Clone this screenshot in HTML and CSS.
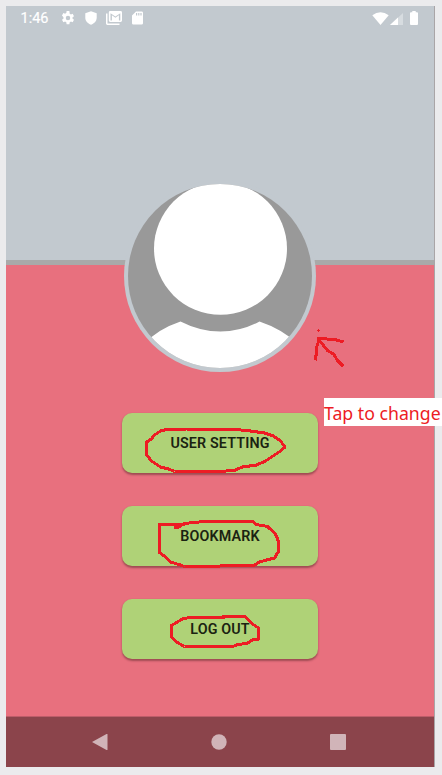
FILE: index.html
```html
<!DOCTYPE html>
<html lang="en">
<head>
<meta charset="utf-8">
<title>Profile</title>
<link rel="stylesheet" href="styles.css">
</head>
<body>
<main class="phone">
  <header class="cover">
    <div class="status">
      <span class="time">1:46</span>
      <svg class="icon gear" viewBox="2.900 2 20 20"><path d="M19.400 13a7.500 7.500 0 0 0 0-2l2.100-1.600-2-3.500-2.500 1a7.600 7.600 0 0 0-1.700-1L14.900 2h-4l-.4 2.900a7.600 7.600 0 0 0-1.700 1l-2.500-1-2 3.500L6.400 11a7.500 7.500 0 0 0 0 2l-2.100 1.600 2 3.500 2.500-1a7.600 7.600 0 0 0 1.700 1l.4 2.900h4l.4-2.900a7.600 7.600 0 0 0 1.700-1l2.500 1 2-3.500zM12.900 15.200a3.200 3.200 0 1 1 0-6.400 3.200 3.200 0 0 1 0 6.400z"/></svg>
      <svg class="icon shield" viewBox="0 0 12 14"><path d="M6 .2 11.700 2.300v4.400c0 3-2.300 5.900-5.700 7C2.600 12.600.3 9.700.3 6.700V2.300z"/></svg>
      <svg class="icon mail" viewBox="0 0 16 14"><path fill-rule="evenodd" d="M4.200 0h10.300Q16 0 16 1.400v8.200Q16 11 14.500 11H4.200Q2.800 11 2.800 9.600V1.400Q2.800 0 4.200 0zM4.500 2.200v7.300h1.400V4.300l3.500 2.500 3.500-2.500v5.200h1.400V2.200L9.400 5.400z"/><path d="M0 2.500h1.500v10h12V14H1.400Q0 14 0 12.600z"/></svg>
      <svg class="icon card" viewBox="0 0 11 14"><path fill-rule="evenodd" d="M4 .5h5.600Q11 .5 11 1.800v10.400q0 1.300-1.400 1.300H1.400Q0 13.500 0 12.200V4.500zM4 2v2.500h1.200V2zm2.200 0v2.500h1.200V2zm2.200 0v2.500h1.200V2z"/></svg>
      <span class="spacer"></span>
      <svg class="icon wifi" viewBox="0 0 17 13"><path d="M.3 3.200Q8.500-2.800 16.700 3.200L8.500 13z"/></svg>
      <svg class="icon signal" viewBox="0 0 13 12"><path opacity=".35" d="M13 0v12H0z"/><path d="M8 4.600V12H0z"/></svg>
      <svg class="icon battery" viewBox="0 0 8 14"><path d="M2.300 0h3.400v1.300H7q1 0 1 1V13q0 1-1 1H1q-1 0-1-1V2.300q0-1 1-1h1.300z"/></svg>
    </div>
  </header>
  <section class="profile">
    <svg class="avatar" viewBox="0 0 192 192">
      <defs><clipPath id="face"><circle cx="96" cy="96" r="92"/></clipPath></defs>
      <circle cx="96" cy="96" r="96" fill="#c2c9cf"/>
      <g clip-path="url(#face)">
        <rect width="192" height="192" fill="#999"/>
        <ellipse cx="96.500" cy="68.500" rx="66.500" ry="66.300" fill="#fff"/>
        <path d="M20 164Q34 149 56.500 141.500 76 151.500 96.500 151.500T135.500 141.500Q158 149 174 164V192H20z" fill="#fff"/>
      </g>
    </svg>
    <nav class="actions">
      <button class="action">USER SETTING</button>
      <button class="action">BOOKMARK</button>
      <button class="action">LOG OUT</button>
    </nav>
  </section>
  <footer class="navbar">
    <svg class="navicon" viewBox="0 0 18 18"><path d="M1 9 15.500 1Q16.500.6 16.500 1.600v14.800q0 1-1 .6z"/></svg>
    <svg class="navicon" viewBox="0 0 18 18"><circle cx="9" cy="9" r="7.700"/></svg>
    <svg class="navicon" viewBox="0 0 18 18"><rect x="1" y="1" width="16" height="16" rx="1"/></svg>
  </footer>
</main>
<svg class="marks" viewBox="-.5 -.5 442 775">
  <path d="M319 338 334 339 343 341.500M318 336V341L316.500 345.500 315 360M319 340 327 350 333 353.500 337 360 343 366"/>
  <path stroke-width="1" d="M316.500 330h3M318 328.500v3"/>
  <path d="M185 428.500 168 428.500 160 430.500 154 434.500 151 438.500 146 441.500V454L151 460.500 160 466.500 168 468.500 174 471H221L235 469.500 242 466.500 256 464.500 265 460.500 274 454.500 280 450.500 284.500 446.500 280 440.500 273 435.500 264 432.500 250 430.500 235 429Z"/>
  <path d="M173 527H177L184 523 203 521H252L256 524 267 526 275 533.500 278 541V551L274 557.500 266 559.500 259 561.500 254 564.500H224L217 566H184L180 564.500 170 561.500 165 556.500 158.500 551.500V523.500H184"/>
  <path d="M223 617H189L182 618.500 171 625V636.500L176 641.500 184 646H232L236 644.500 247 642.500 252 639.500 258 638.500V627.500L252 623.500 245 616.500 238 615.500H223Z"/>
</svg>
<div class="note">Tap to change</div>
</body>
</html>
```
FILE: styles.css
```css
* { box-sizing: border-box; }
body {
  position: relative;
  margin: 0;
  width: 442px;
  height: 775px;
  padding: 6px;
  overflow: hidden;
  background: #ebebed;
  font-family: Roboto, sans-serif;
}
.phone {
  display: flex;
  flex-direction: column;
  width: 429px;
  height: 761px;
  border-right: 1px solid #a9a5a7;
  background: #e8707e;
}
.cover {
  height: 259px;
  border-bottom: 5px solid #a9a9a9;
  background: #c2c9cf;
}
.status {
  display: flex;
  align-items: center;
  height: 24px;
  padding: 0 16px 0 14.500px;
  color: #fff;
}
.time {
  width: 40px;
  padding-top: 1px;
  font-size: 14.500px;
  font-weight: 400;
  -webkit-text-stroke: .2px #fff;
}
.icon { flex: none; fill: #fff; }
.gear { width: 14px; height: 14px; }
.shield { width: 12px; height: 14px; margin-left: 10px; }
.mail { width: 16px; height: 14px; margin-left: 9px; }
.card { width: 11px; height: 14px; margin-left: 10px; }
.spacer { flex: 1; }
.wifi { width: 17px; height: 13px; }
.signal { width: 13px; height: 12px; margin: 1px 7px 0 1px; }
.battery { width: 8px; height: 14px; }
.profile {
  display: flex;
  flex: 1;
  flex-direction: column;
  align-items: center;
}
.avatar {
  display: block;
  width: 192px;
  height: 192px;
  margin-top: -85px;
  flex: none;
  z-index: 1;
}
.actions {
  display: flex;
  flex-direction: column;
  gap: 33px;
  margin-top: 41.400px;
}
.action {
  width: 196px;
  height: 59.800px;
  padding: 0;
  border: 0;
  border-radius: 10px;
  background: #afd277;
  box-shadow: 0 1.500px 2px rgba(70, 30, 30, .45);
  color: #1b2312;
  font: 600 14.300px Roboto, sans-serif;
  letter-spacing: .15px;
}
.navbar {
  display: flex;
  align-items: center;
  justify-content: space-between;
  height: 51px;
  padding: 0 87.500px 0 85px;
  border-top: 1px solid #bd5d69;
  background: #8b444b;
}
.navicon { width: 18px; height: 18px; fill: #d1b4b8; }
.marks {
  position: absolute;
  z-index: 2;
  top: 0;
  left: 0;
  width: 442px;
  height: 775px;
  fill: none;
  stroke: #ed1c24;
  stroke-width: 3;
  stroke-linejoin: round;
  shape-rendering: crispEdges;
}
.note {
  position: absolute;
  z-index: 3;
  top: 398px;
  left: 324px;
  width: 118px;
  height: 28px;
  background: #fff;
  color: #ed1c24;
  font: 17.700px/30px "Noto Sans", sans-serif;
  white-space: nowrap;
}
```
